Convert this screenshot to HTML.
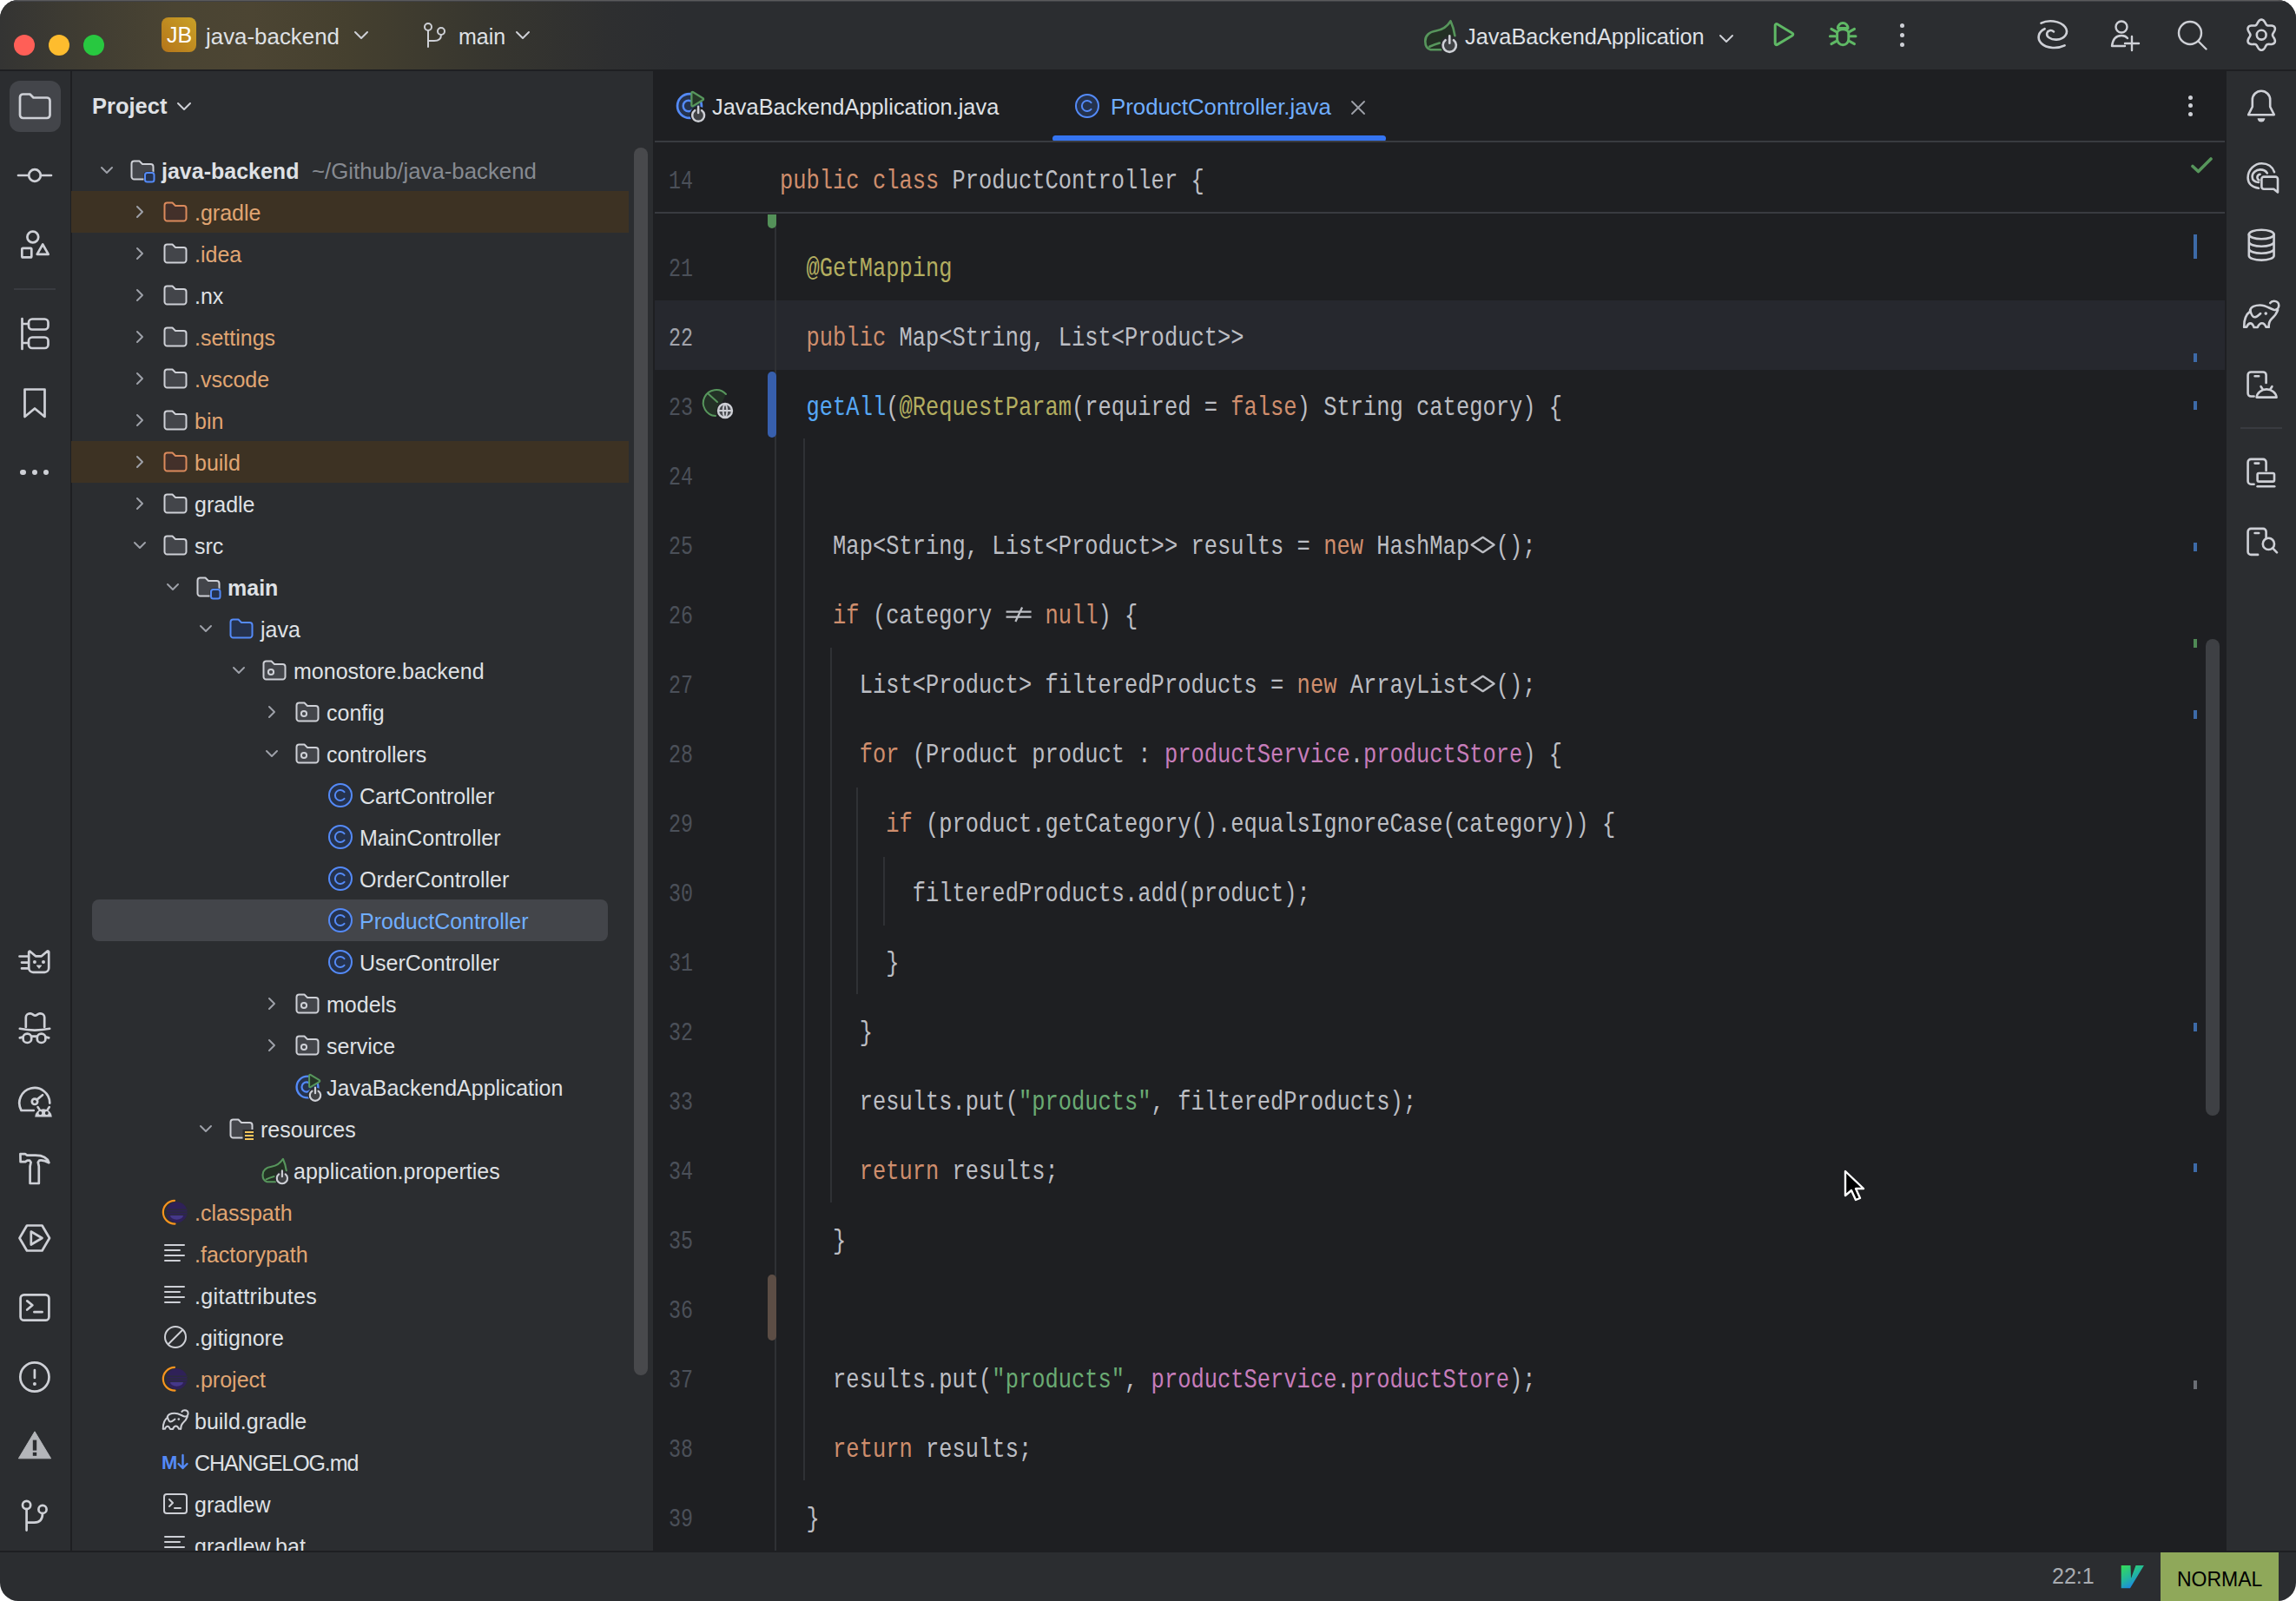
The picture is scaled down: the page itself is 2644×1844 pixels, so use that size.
<!DOCTYPE html><html><head><meta charset="utf-8"><style>html,body{margin:0;padding:0;background:#fff;width:2644px;height:1844px;overflow:hidden}#win{position:absolute;left:0;top:0;width:2644px;height:1844px;border-radius:21px;overflow:hidden;background:#2b2d30}.code{position:absolute;font-family:"Liberation Mono",monospace;font-size:32px;line-height:80px;color:#bcbec4;white-space:pre;transform-origin:0 0;transform:scaleX(0.7953)}.k{color:#cf8e6d}.an{color:#b3ae60}.fn{color:#56a8f5}.fd{color:#c77dbb}.st{color:#6aab73}.lig{display:inline-block;width:2ch;text-align:center;position:relative}</style></head><body><div id="win"><div style="position:absolute;left:0;top:0;width:2644px;height:80px;background:linear-gradient(90deg, #343433 0px, #3f3c32 90px, #4a4433 200px, #4c4533 290px, #45402f 400px, #37362f 560px, #2e2f30 700px, #2b2d30 780px)"></div><div style="position:absolute;left:0px;top:0px;width:2644px;height:1px;background:#5a5a5c;"></div><div style="position:absolute;left:0px;top:1px;width:2644px;height:1px;background:#404145;"></div><div style="position:absolute;left:0px;top:80px;width:2644px;height:2px;background:#1e1f22;"></div><div style="position:absolute;left:16px;top:40px;width:24px;height:24px;border-radius:50%;background:#ff5f57"></div><div style="position:absolute;left:56px;top:40px;width:24px;height:24px;border-radius:50%;background:#febc2e"></div><div style="position:absolute;left:96px;top:40px;width:24px;height:24px;border-radius:50%;background:#28c840"></div><div style="position:absolute;left:186px;top:20px;width:40px;height:40px;border-radius:8px;background:linear-gradient(45deg,#b5751a,#c9a127)"></div><div style="position:absolute;left:192px;top:27px;font-family:'Liberation Sans', sans-serif;font-size:25px;line-height:26px;color:#fff;font-weight:400;white-space:pre;">JB</div><div style="position:absolute;left:237px;top:28.5px;font-family:'Liberation Sans', sans-serif;font-size:25.9px;line-height:26px;color:#dfe1e5;font-weight:400;white-space:pre;">java-backend</div><svg style="position:absolute;left:404px;top:28px;overflow:visible" width="24" height="24" viewBox="0 0 24 24" fill="none" stroke-linecap="round" stroke-linejoin="round"><path d="M5 9l7 7 7-7" stroke="#ced0d6" stroke-width="2"/></svg><svg style="position:absolute;left:484px;top:24px;overflow:visible" width="32" height="32" viewBox="0 0 32 32" fill="none" stroke-linecap="round" stroke-linejoin="round"><circle cx="9" cy="7" r="4" stroke="#ced0d6" stroke-width="2"/><circle cx="24" cy="12" r="4" stroke="#ced0d6" stroke-width="2"/><path d="M9 11v19M24 16c0 5-3 7-8 7h-7" stroke="#ced0d6" stroke-width="2"/></svg><div style="position:absolute;left:528px;top:28.5px;font-family:'Liberation Sans', sans-serif;font-size:25px;line-height:26px;color:#dfe1e5;font-weight:400;white-space:pre;">main</div><svg style="position:absolute;left:590px;top:28px;overflow:visible" width="24" height="24" viewBox="0 0 24 24" fill="none" stroke-linecap="round" stroke-linejoin="round"><path d="M5 9l7 7 7-7" stroke="#ced0d6" stroke-width="2"/></svg><svg style="position:absolute;left:1640px;top:23px;overflow:visible" width="40" height="40" viewBox="0 0 32 32" fill="none" stroke-linecap="round" stroke-linejoin="round"><g><path d="M24.4 1C21 6.5 17 9 11 10 5 11 1 14 1 19.5c0 4 2 7 5 7.9h9.5L28.3 14.5C27.6 10 26.2 5 24.4 1z" fill="#233024"/><path d="M15.5 27.4H6c-3-.9-5-3.9-5-7.9C1 14 5 11 11 10c6-1 10-3.5 13.4-9 1.8 4 3.2 9 3.9 13.5" stroke="#57965c" stroke-width="2.1"/><path d="M5 24.6c3-1.5 6-2.5 9.2-3.4" stroke="#57965c" stroke-width="2.1"/><circle cx="23.4" cy="23" r="8.4" fill="#2b2d30"/><circle cx="23.4" cy="23" r="6" fill="#404245"/><path d="M19.6 18.6a6.1 6.1 0 1 0 7.6 0M23.4 14.6v6.8" stroke="#ced0d6" stroke-width="2.1"/></g></svg><div style="position:absolute;left:1687px;top:28.5px;font-family:'Liberation Sans', sans-serif;font-size:25.3px;line-height:26px;color:#dfe1e5;font-weight:400;white-space:pre;">JavaBackendApplication</div><svg style="position:absolute;left:1976px;top:32px;overflow:visible" width="24" height="24" viewBox="0 0 24 24" fill="none" stroke-linecap="round" stroke-linejoin="round"><path d="M5 9l7 7 7-7" stroke="#ced0d6" stroke-width="2"/></svg><svg style="position:absolute;left:0;top:0" width="2644" height="80"><g stroke="#5fb865" stroke-width="3" fill="none" stroke-linecap="round" stroke-linejoin="round"><path d="M2044.2 29.2a1.6 1.6 0 0 1 2.4-1.4l17.4 10.4a1.6 1.6 0 0 1 0 2.8L2046.6 51.4a1.6 1.6 0 0 1-2.4-1.4z"/><path d="M2116.4 32.4a5.8 5.8 0 0 1 11.6 0z"/><path d="M2115.6 38a6.6 4.2 0 0 1 13.2 0v7a6.6 6.8 0 0 1-13.2 0z"/><path d="M2108.9 33.4l5.4 3M2107.4 41.8h6M2108.9 50.6l5.4-3M2135.5 33.4l-5.4 3M2137 41.8h-6M2135.5 50.6l-5.4-3"/></g></svg><div style="position:absolute;left:2187.5px;top:26.9px;width:5.2px;height:5.2px;border-radius:50%;background:#ced0d6"></div><div style="position:absolute;left:2187.5px;top:37.9px;width:5.2px;height:5.2px;border-radius:50%;background:#ced0d6"></div><div style="position:absolute;left:2187.5px;top:48.9px;width:5.2px;height:5.2px;border-radius:50%;background:#ced0d6"></div><svg style="position:absolute;left:2428px;top:22px;overflow:visible" width="38" height="38" viewBox="0 0 38 38" fill="none" stroke-linecap="round" stroke-linejoin="round"><circle cx="15" cy="9" r="6.5" stroke="#ced0d6" stroke-width="2.4"/><path d="M22 22c-1.5-2-4-3-7-3-6 0-10 4-11 12h15M27 20v16M19 28h16" stroke="#ced0d6" stroke-width="2.4"/></svg><svg style="position:absolute;left:2506px;top:22px;overflow:visible" width="38" height="38" viewBox="0 0 38 38" fill="none" stroke-linecap="round" stroke-linejoin="round"><circle cx="16" cy="16" r="13" stroke="#ced0d6" stroke-width="2.4"/><path d="M25.5 25.5l9 9" stroke="#ced0d6" stroke-width="2.4"/></svg><svg style="position:absolute;left:0;top:0" width="2644" height="80"><g stroke="#ced0d6" stroke-width="2.6" fill="none" stroke-linecap="round" stroke-linejoin="round"><path d="M2604.20 22.60 L2604.81 22.66 L2605.41 22.85 L2605.99 23.15 L2606.54 23.56 L2607.05 24.05 L2607.51 24.61 L2607.94 25.21 L2608.32 25.83 L2608.67 26.45 L2608.99 27.04 L2609.29 27.60 L2609.59 28.09 L2609.90 28.51 L2610.23 28.85 L2610.60 29.11 L2611.01 29.30 L2611.47 29.42 L2611.99 29.47 L2612.57 29.49 L2613.20 29.48 L2613.87 29.46 L2614.58 29.45 L2615.31 29.47 L2616.05 29.53 L2616.76 29.66 L2617.44 29.85 L2618.07 30.12 L2618.62 30.47 L2619.08 30.90 L2619.44 31.40 L2619.69 31.96 L2619.83 32.58 L2619.86 33.23 L2619.78 33.90 L2619.61 34.59 L2619.36 35.27 L2619.05 35.94 L2618.71 36.58 L2618.34 37.19 L2617.99 37.77 L2617.66 38.31 L2617.39 38.81 L2617.18 39.29 L2617.04 39.75 L2617.00 40.20 L2617.04 40.65 L2617.18 41.11 L2617.39 41.59 L2617.66 42.09 L2617.99 42.63 L2618.34 43.21 L2618.71 43.82 L2619.05 44.46 L2619.36 45.13 L2619.61 45.81 L2619.78 46.50 L2619.86 47.17 L2619.83 47.82 L2619.69 48.44 L2619.44 49.00 L2619.08 49.50 L2618.62 49.93 L2618.07 50.28 L2617.44 50.55 L2616.76 50.74 L2616.05 50.87 L2615.31 50.93 L2614.58 50.95 L2613.87 50.94 L2613.20 50.92 L2612.57 50.91 L2611.99 50.93 L2611.47 50.98 L2611.01 51.10 L2610.60 51.29 L2610.23 51.55 L2609.90 51.89 L2609.59 52.31 L2609.29 52.80 L2608.99 53.36 L2608.67 53.95 L2608.32 54.57 L2607.94 55.19 L2607.51 55.79 L2607.05 56.35 L2606.54 56.84 L2605.99 57.25 L2605.41 57.55 L2604.81 57.74 L2604.20 57.80 L2603.59 57.74 L2602.99 57.55 L2602.41 57.25 L2601.86 56.84 L2601.35 56.35 L2600.89 55.79 L2600.46 55.19 L2600.08 54.57 L2599.73 53.95 L2599.41 53.36 L2599.11 52.80 L2598.81 52.31 L2598.50 51.89 L2598.17 51.55 L2597.80 51.29 L2597.39 51.10 L2596.93 50.98 L2596.41 50.93 L2595.83 50.91 L2595.20 50.92 L2594.53 50.94 L2593.82 50.95 L2593.09 50.93 L2592.35 50.87 L2591.64 50.74 L2590.96 50.55 L2590.33 50.28 L2589.78 49.93 L2589.32 49.50 L2588.96 49.00 L2588.71 48.44 L2588.57 47.82 L2588.54 47.17 L2588.62 46.50 L2588.79 45.81 L2589.04 45.13 L2589.35 44.46 L2589.69 43.82 L2590.06 43.21 L2590.41 42.63 L2590.74 42.09 L2591.01 41.59 L2591.22 41.11 L2591.36 40.65 L2591.40 40.20 L2591.36 39.75 L2591.22 39.29 L2591.01 38.81 L2590.74 38.31 L2590.41 37.77 L2590.06 37.19 L2589.69 36.58 L2589.35 35.94 L2589.04 35.27 L2588.79 34.59 L2588.62 33.90 L2588.54 33.23 L2588.57 32.58 L2588.71 31.96 L2588.96 31.40 L2589.32 30.90 L2589.78 30.47 L2590.33 30.12 L2590.96 29.85 L2591.64 29.66 L2592.35 29.53 L2593.09 29.47 L2593.82 29.45 L2594.53 29.46 L2595.20 29.48 L2595.83 29.49 L2596.41 29.47 L2596.93 29.42 L2597.39 29.30 L2597.80 29.11 L2598.17 28.85 L2598.50 28.51 L2598.81 28.09 L2599.11 27.60 L2599.41 27.04 L2599.73 26.45 L2600.08 25.83 L2600.46 25.21 L2600.89 24.61 L2601.35 24.05 L2601.86 23.56 L2602.41 23.15 L2602.99 22.85 L2603.59 22.66 L2604.20 22.60Z"/><circle cx="2604.2" cy="40.2" r="5.4"/><path d="M2350.5 26.6C2358 22.8 2372 23.2 2378.2 31.2 2383 37.8 2377.4 45 2368.4 45.6 2361.4 46 2356.4 42.2 2357.2 38.2 2358 35 2362.2 34 2365 36.4"/><path d="M2377.6 52.4C2370 56.2 2357 56.2 2350.8 50 2345 44 2347.6 36.4 2354.6 33.2"/></g></svg><div style="position:absolute;left:81px;top:82px;width:2px;height:1704px;background:#1e1f22;"></div><div style="position:absolute;left:10.5px;top:92.5px;width:59.5px;height:59px;border-radius:12px;background:#43454a"></div><svg style="position:absolute;left:0;top:0" width="81" height="1844" viewBox="0 0 81 1844"><g stroke="#ced0d6" stroke-width="2.7" fill="none" stroke-linecap="round" stroke-linejoin="round"><path d="M23 112a3.5 3.5 0 0 1 3.5-3.5h8l4 4h15.5a3.5 3.5 0 0 1 3.5 3.5v16.5a3.5 3.5 0 0 1-3.5 3.5h-27.5a3.5 3.5 0 0 1-3.5-3.5z"/><circle cx="40" cy="202" r="6.8"/><path d="M21 202h12M47 202h12"/><circle cx="37.8" cy="273" r="6.4"/><rect x="25.3" y="285.8" width="11" height="10.6" rx="1.2"/><path d="M49.2 281.5l6.5 11.3h-13z"/><path d="M25.5 367v35M25.5 373h6M25.5 395h6"/><rect x="33" y="367.5" width="22.5" height="12" rx="4"/><rect x="33" y="388.5" width="22.5" height="12.5" rx="4"/><path d="M28.5 448.5h23v31.5l-11.5-9.5-11.5 9.5z"/><path d="M22.5 1101.5h10M25 1108.6h7.6M25 1115.4h7.6"/><path d="M34.2 1095.5l6.8 5.8h6.8l6.8-5.8a1.2 1.2 0 0 1 1.6 1v18.5a4.8 4.8 0 0 1-4.8 4.8h-13.4a4.8 4.8 0 0 1-4.8-4.8v-18.5a1.2 1.2 0 0 1 1-1z"/><path d="M29.8 1183v-11.2a4.5 4.5 0 0 1 4.5-4.5h1c2.2 0 3.3 2.4 5.2 2.4s3-2.4 5.2-2.4h1a4.5 4.5 0 0 1 4.5 4.5v11.2"/><path d="M22.8 1184.8q17.2 3.6 34.4 0"/><rect x="26.6" y="1190.6" width="9.6" height="10.4" rx="4.6"/><rect x="42.8" y="1190.6" width="9.6" height="10.4" rx="4.6"/><path d="M36.2 1193.6h6.6M22.8 1195.4l3.8-1M52.4 1194.4l3.8 1"/><path d="M38.8 1279H24.5A17.5 17.5 0 1 1 57.3 1270.6"/><circle cx="40" cy="1268.8" r="3.2"/><path d="M42.4 1266.6l6.6-5.4"/></g><circle cx="39.9" cy="1108" r="2" fill="#ced0d6"/><circle cx="50" cy="1108" r="2" fill="#ced0d6"/><path d="M42.2 1112h5.6l-2.8 3.4z" fill="#ced0d6" stroke="#ced0d6" stroke-width="0.8" stroke-linejoin="round"/><path d="M40.2 1286.5a9.8 9.3 0 0 1 19.6 0z" fill="#ced0d6"/><path d="M43.5 1275l2.4 3.6M56.8 1275l-2.4 3.6" stroke="#ced0d6" stroke-width="2.6" stroke-linecap="round"/><circle cx="46.4" cy="1282" r="1.9" fill="#2b2d30"/><circle cx="53.8" cy="1282" r="1.9" fill="#2b2d30"/><g stroke="#ced0d6" stroke-width="2.7" fill="none" stroke-linecap="round" stroke-linejoin="round"><path d="M23.4 1329.2h5.6l2.2 1.4h9.6c8 0 13.8 2.8 15.6 8.6-3.6-2-8-3.2-11.2-2.6l-1.4 2.2 1 4.6v19.6h-10.2v-19.6l1-4.6-1.4-2.2h-2.8l-2.2 1.6h-5.6z"/><path d="M22.5 1426l8.5-14.5h17.5l8.5 14.5-8.5 14.5h-17.5z"/><path d="M35.8 1418.5l12.7 7.5-12.7 7.5z"/><rect x="23.6" y="1491.3" width="32.8" height="29.4" rx="4"/><path d="M31.2 1498.4l6.2 4.8-6.2 5.4M39.4 1511.2h9.2"/><circle cx="39.9" cy="1586" r="16.6"/><path d="M39.9 1578v9"/></g><circle cx="39.9" cy="1594" r="2" fill="#ced0d6"/><path d="M40 1648.8L58.6 1679.8H21.4z" fill="#b4b6ba" stroke="#b4b6ba" stroke-width="1" stroke-linejoin="round"/><rect x="37.8" y="1658.6" width="4.4" height="12" fill="#2b2d30"/><rect x="37.8" y="1672.8" width="4.4" height="4" fill="#2b2d30"/><g stroke="#ced0d6" stroke-width="2.7" fill="none" stroke-linecap="round" stroke-linejoin="round"><circle cx="30.6" cy="1733.5" r="4.6"/><circle cx="49" cy="1738.4" r="4.6"/><path d="M30.6 1738.2v24.4M49 1743c0 6.5-3 10.6-9.5 10.6h-8.9"/></g></svg><div style="position:absolute;left:23.3px;top:540.8px;width:6.4px;height:6.4px;border-radius:50%;background:#ced0d6"></div><div style="position:absolute;left:36.5px;top:540.8px;width:6.4px;height:6.4px;border-radius:50%;background:#ced0d6"></div><div style="position:absolute;left:49.599999999999994px;top:540.8px;width:6.4px;height:6.4px;border-radius:50%;background:#ced0d6"></div><div style="position:absolute;left:16px;top:332px;width:48px;height:2px;background:#393b40;"></div><div style="position:absolute;left:106px;top:109px;font-family:'Liberation Sans', sans-serif;font-size:25.5px;line-height:26px;color:#dfe1e5;font-weight:700;white-space:pre;">Project</div><svg style="position:absolute;left:200px;top:110px;overflow:visible" width="24" height="24" viewBox="0 0 24 24" fill="none" stroke-linecap="round" stroke-linejoin="round"><path d="M5 9l7 7 7-7" stroke="#ced0d6" stroke-width="2"/></svg><div style="position:absolute;left:0;top:0;width:752px;height:1786px;overflow:hidden"><div style="position:absolute;left:0;top:172px;width:752px;height:1614px;overflow:hidden"><div style="position:absolute;left:0;top:-172px"><svg style="position:absolute;left:107px;top:180px;overflow:visible" width="32" height="32" viewBox="0 0 32 32" fill="none" stroke-linecap="round" stroke-linejoin="round"><path d="M10 13l6 6 6-6" stroke="#9da0a8" stroke-width="2"/></svg><svg style="position:absolute;left:148px;top:180px;overflow:visible" width="32" height="32" viewBox="0 0 32 32" fill="none" stroke-linecap="round" stroke-linejoin="round"><path d="M3.5 8.5a3 3 0 0 1 3-3h6l3.5 3.5h9.5a3 3 0 0 1 3 3v11.5a3 3 0 0 1-3 3h-19a3 3 0 0 1-3-3z" stroke="#ced0d6" stroke-width="2" fill="#43454a"/><rect x="17.5" y="17.5" width="13" height="13" rx="3.5" fill="#2b2d30"/><rect x="19" y="19" width="10.5" height="10.5" rx="2.5" stroke="#548af7" stroke-width="2" fill="#25324d"/></svg><div style="position:absolute;left:186px;top:183.5px;font-family:'Liberation Sans', sans-serif;font-size:25px;line-height:26px;color:#dfe1e5;font-weight:700;white-space:pre;">java-backend</div><div style="position:absolute;left:359px;top:183.5px;font-family:'Liberation Sans', sans-serif;font-size:25.8px;line-height:26px;color:#868a91;font-weight:400;white-space:pre;">~/Github/java-backend</div><div style="position:absolute;left:82px;top:220px;width:642px;height:48px;background:#3d3223;"></div><svg style="position:absolute;left:145px;top:228px;overflow:visible" width="32" height="32" viewBox="0 0 32 32" fill="none" stroke-linecap="round" stroke-linejoin="round"><path d="M13 10l6 6-6 6" stroke="#9da0a8" stroke-width="2"/></svg><svg style="position:absolute;left:186px;top:228px;overflow:visible" width="32" height="32" viewBox="0 0 32 32" fill="none" stroke-linecap="round" stroke-linejoin="round"><path d="M3.5 8.5a3 3 0 0 1 3-3h6l3.5 3.5h9.5a3 3 0 0 1 3 3v11.5a3 3 0 0 1-3 3h-19a3 3 0 0 1-3-3z" stroke="#db8a5c" stroke-width="2" fill="#43302a"/></svg><div style="position:absolute;left:224px;top:231.5px;font-family:'Liberation Sans', sans-serif;font-size:25px;line-height:26px;color:#e0a572;font-weight:400;white-space:pre;">.gradle</div><svg style="position:absolute;left:145px;top:276px;overflow:visible" width="32" height="32" viewBox="0 0 32 32" fill="none" stroke-linecap="round" stroke-linejoin="round"><path d="M13 10l6 6-6 6" stroke="#9da0a8" stroke-width="2"/></svg><svg style="position:absolute;left:186px;top:276px;overflow:visible" width="32" height="32" viewBox="0 0 32 32" fill="none" stroke-linecap="round" stroke-linejoin="round"><path d="M3.5 8.5a3 3 0 0 1 3-3h6l3.5 3.5h9.5a3 3 0 0 1 3 3v11.5a3 3 0 0 1-3 3h-19a3 3 0 0 1-3-3z" stroke="#ced0d6" stroke-width="2" fill="#43454a"/></svg><div style="position:absolute;left:224px;top:279.5px;font-family:'Liberation Sans', sans-serif;font-size:25px;line-height:26px;color:#e0a572;font-weight:400;white-space:pre;">.idea</div><svg style="position:absolute;left:145px;top:324px;overflow:visible" width="32" height="32" viewBox="0 0 32 32" fill="none" stroke-linecap="round" stroke-linejoin="round"><path d="M13 10l6 6-6 6" stroke="#9da0a8" stroke-width="2"/></svg><svg style="position:absolute;left:186px;top:324px;overflow:visible" width="32" height="32" viewBox="0 0 32 32" fill="none" stroke-linecap="round" stroke-linejoin="round"><path d="M3.5 8.5a3 3 0 0 1 3-3h6l3.5 3.5h9.5a3 3 0 0 1 3 3v11.5a3 3 0 0 1-3 3h-19a3 3 0 0 1-3-3z" stroke="#ced0d6" stroke-width="2" fill="#43454a"/></svg><div style="position:absolute;left:224px;top:327.5px;font-family:'Liberation Sans', sans-serif;font-size:25px;line-height:26px;color:#dfe1e5;font-weight:400;white-space:pre;">.nx</div><svg style="position:absolute;left:145px;top:372px;overflow:visible" width="32" height="32" viewBox="0 0 32 32" fill="none" stroke-linecap="round" stroke-linejoin="round"><path d="M13 10l6 6-6 6" stroke="#9da0a8" stroke-width="2"/></svg><svg style="position:absolute;left:186px;top:372px;overflow:visible" width="32" height="32" viewBox="0 0 32 32" fill="none" stroke-linecap="round" stroke-linejoin="round"><path d="M3.5 8.5a3 3 0 0 1 3-3h6l3.5 3.5h9.5a3 3 0 0 1 3 3v11.5a3 3 0 0 1-3 3h-19a3 3 0 0 1-3-3z" stroke="#ced0d6" stroke-width="2" fill="#43454a"/></svg><div style="position:absolute;left:224px;top:375.5px;font-family:'Liberation Sans', sans-serif;font-size:25px;line-height:26px;color:#e0a572;font-weight:400;white-space:pre;">.settings</div><svg style="position:absolute;left:145px;top:420px;overflow:visible" width="32" height="32" viewBox="0 0 32 32" fill="none" stroke-linecap="round" stroke-linejoin="round"><path d="M13 10l6 6-6 6" stroke="#9da0a8" stroke-width="2"/></svg><svg style="position:absolute;left:186px;top:420px;overflow:visible" width="32" height="32" viewBox="0 0 32 32" fill="none" stroke-linecap="round" stroke-linejoin="round"><path d="M3.5 8.5a3 3 0 0 1 3-3h6l3.5 3.5h9.5a3 3 0 0 1 3 3v11.5a3 3 0 0 1-3 3h-19a3 3 0 0 1-3-3z" stroke="#ced0d6" stroke-width="2" fill="#43454a"/></svg><div style="position:absolute;left:224px;top:423.5px;font-family:'Liberation Sans', sans-serif;font-size:25px;line-height:26px;color:#e0a572;font-weight:400;white-space:pre;">.vscode</div><svg style="position:absolute;left:145px;top:468px;overflow:visible" width="32" height="32" viewBox="0 0 32 32" fill="none" stroke-linecap="round" stroke-linejoin="round"><path d="M13 10l6 6-6 6" stroke="#9da0a8" stroke-width="2"/></svg><svg style="position:absolute;left:186px;top:468px;overflow:visible" width="32" height="32" viewBox="0 0 32 32" fill="none" stroke-linecap="round" stroke-linejoin="round"><path d="M3.5 8.5a3 3 0 0 1 3-3h6l3.5 3.5h9.5a3 3 0 0 1 3 3v11.5a3 3 0 0 1-3 3h-19a3 3 0 0 1-3-3z" stroke="#ced0d6" stroke-width="2" fill="#43454a"/></svg><div style="position:absolute;left:224px;top:471.5px;font-family:'Liberation Sans', sans-serif;font-size:25px;line-height:26px;color:#e0a572;font-weight:400;white-space:pre;">bin</div><div style="position:absolute;left:82px;top:508px;width:642px;height:48px;background:#3d3223;"></div><svg style="position:absolute;left:145px;top:516px;overflow:visible" width="32" height="32" viewBox="0 0 32 32" fill="none" stroke-linecap="round" stroke-linejoin="round"><path d="M13 10l6 6-6 6" stroke="#9da0a8" stroke-width="2"/></svg><svg style="position:absolute;left:186px;top:516px;overflow:visible" width="32" height="32" viewBox="0 0 32 32" fill="none" stroke-linecap="round" stroke-linejoin="round"><path d="M3.5 8.5a3 3 0 0 1 3-3h6l3.5 3.5h9.5a3 3 0 0 1 3 3v11.5a3 3 0 0 1-3 3h-19a3 3 0 0 1-3-3z" stroke="#db8a5c" stroke-width="2" fill="#43302a"/></svg><div style="position:absolute;left:224px;top:519.5px;font-family:'Liberation Sans', sans-serif;font-size:25px;line-height:26px;color:#e0a572;font-weight:400;white-space:pre;">build</div><svg style="position:absolute;left:145px;top:564px;overflow:visible" width="32" height="32" viewBox="0 0 32 32" fill="none" stroke-linecap="round" stroke-linejoin="round"><path d="M13 10l6 6-6 6" stroke="#9da0a8" stroke-width="2"/></svg><svg style="position:absolute;left:186px;top:564px;overflow:visible" width="32" height="32" viewBox="0 0 32 32" fill="none" stroke-linecap="round" stroke-linejoin="round"><path d="M3.5 8.5a3 3 0 0 1 3-3h6l3.5 3.5h9.5a3 3 0 0 1 3 3v11.5a3 3 0 0 1-3 3h-19a3 3 0 0 1-3-3z" stroke="#ced0d6" stroke-width="2" fill="#43454a"/></svg><div style="position:absolute;left:224px;top:567.5px;font-family:'Liberation Sans', sans-serif;font-size:25px;line-height:26px;color:#dfe1e5;font-weight:400;white-space:pre;">gradle</div><svg style="position:absolute;left:145px;top:612px;overflow:visible" width="32" height="32" viewBox="0 0 32 32" fill="none" stroke-linecap="round" stroke-linejoin="round"><path d="M10 13l6 6 6-6" stroke="#9da0a8" stroke-width="2"/></svg><svg style="position:absolute;left:186px;top:612px;overflow:visible" width="32" height="32" viewBox="0 0 32 32" fill="none" stroke-linecap="round" stroke-linejoin="round"><path d="M3.5 8.5a3 3 0 0 1 3-3h6l3.5 3.5h9.5a3 3 0 0 1 3 3v11.5a3 3 0 0 1-3 3h-19a3 3 0 0 1-3-3z" stroke="#ced0d6" stroke-width="2" fill="#43454a"/></svg><div style="position:absolute;left:224px;top:615.5px;font-family:'Liberation Sans', sans-serif;font-size:25px;line-height:26px;color:#dfe1e5;font-weight:400;white-space:pre;">src</div><svg style="position:absolute;left:183px;top:660px;overflow:visible" width="32" height="32" viewBox="0 0 32 32" fill="none" stroke-linecap="round" stroke-linejoin="round"><path d="M10 13l6 6 6-6" stroke="#9da0a8" stroke-width="2"/></svg><svg style="position:absolute;left:224px;top:660px;overflow:visible" width="32" height="32" viewBox="0 0 32 32" fill="none" stroke-linecap="round" stroke-linejoin="round"><path d="M3.5 8.5a3 3 0 0 1 3-3h6l3.5 3.5h9.5a3 3 0 0 1 3 3v11.5a3 3 0 0 1-3 3h-19a3 3 0 0 1-3-3z" stroke="#ced0d6" stroke-width="2" fill="#43454a"/><rect x="17.5" y="17.5" width="13" height="13" rx="3.5" fill="#2b2d30"/><rect x="19" y="19" width="10.5" height="10.5" rx="2.5" stroke="#548af7" stroke-width="2" fill="#25324d"/></svg><div style="position:absolute;left:262px;top:663.5px;font-family:'Liberation Sans', sans-serif;font-size:25px;line-height:26px;color:#dfe1e5;font-weight:700;white-space:pre;">main</div><svg style="position:absolute;left:221px;top:708px;overflow:visible" width="32" height="32" viewBox="0 0 32 32" fill="none" stroke-linecap="round" stroke-linejoin="round"><path d="M10 13l6 6 6-6" stroke="#9da0a8" stroke-width="2"/></svg><svg style="position:absolute;left:262px;top:708px;overflow:visible" width="32" height="32" viewBox="0 0 32 32" fill="none" stroke-linecap="round" stroke-linejoin="round"><path d="M3.5 8.5a3 3 0 0 1 3-3h6l3.5 3.5h9.5a3 3 0 0 1 3 3v11.5a3 3 0 0 1-3 3h-19a3 3 0 0 1-3-3z" stroke="#548af7" stroke-width="2" fill="#25324d"/></svg><div style="position:absolute;left:300px;top:711.5px;font-family:'Liberation Sans', sans-serif;font-size:25px;line-height:26px;color:#dfe1e5;font-weight:400;white-space:pre;">java</div><svg style="position:absolute;left:259px;top:756px;overflow:visible" width="32" height="32" viewBox="0 0 32 32" fill="none" stroke-linecap="round" stroke-linejoin="round"><path d="M10 13l6 6 6-6" stroke="#9da0a8" stroke-width="2"/></svg><svg style="position:absolute;left:300px;top:756px;overflow:visible" width="32" height="32" viewBox="0 0 32 32" fill="none" stroke-linecap="round" stroke-linejoin="round"><path d="M3.5 8.5a3 3 0 0 1 3-3h6l3.5 3.5h9.5a3 3 0 0 1 3 3v11.5a3 3 0 0 1-3 3h-19a3 3 0 0 1-3-3z" stroke="#ced0d6" stroke-width="2" fill="#43454a"/><circle cx="12" cy="18" r="3.1" stroke="#ced0d6" stroke-width="2"/></svg><div style="position:absolute;left:338px;top:759.5px;font-family:'Liberation Sans', sans-serif;font-size:25px;line-height:26px;color:#dfe1e5;font-weight:400;white-space:pre;">monostore.backend</div><svg style="position:absolute;left:297px;top:804px;overflow:visible" width="32" height="32" viewBox="0 0 32 32" fill="none" stroke-linecap="round" stroke-linejoin="round"><path d="M13 10l6 6-6 6" stroke="#9da0a8" stroke-width="2"/></svg><svg style="position:absolute;left:338px;top:804px;overflow:visible" width="32" height="32" viewBox="0 0 32 32" fill="none" stroke-linecap="round" stroke-linejoin="round"><path d="M3.5 8.5a3 3 0 0 1 3-3h6l3.5 3.5h9.5a3 3 0 0 1 3 3v11.5a3 3 0 0 1-3 3h-19a3 3 0 0 1-3-3z" stroke="#ced0d6" stroke-width="2" fill="#43454a"/><circle cx="12" cy="18" r="3.1" stroke="#ced0d6" stroke-width="2"/></svg><div style="position:absolute;left:376px;top:807.5px;font-family:'Liberation Sans', sans-serif;font-size:25px;line-height:26px;color:#dfe1e5;font-weight:400;white-space:pre;">config</div><svg style="position:absolute;left:297px;top:852px;overflow:visible" width="32" height="32" viewBox="0 0 32 32" fill="none" stroke-linecap="round" stroke-linejoin="round"><path d="M10 13l6 6 6-6" stroke="#9da0a8" stroke-width="2"/></svg><svg style="position:absolute;left:338px;top:852px;overflow:visible" width="32" height="32" viewBox="0 0 32 32" fill="none" stroke-linecap="round" stroke-linejoin="round"><path d="M3.5 8.5a3 3 0 0 1 3-3h6l3.5 3.5h9.5a3 3 0 0 1 3 3v11.5a3 3 0 0 1-3 3h-19a3 3 0 0 1-3-3z" stroke="#ced0d6" stroke-width="2" fill="#43454a"/><circle cx="12" cy="18" r="3.1" stroke="#ced0d6" stroke-width="2"/></svg><div style="position:absolute;left:376px;top:855.5px;font-family:'Liberation Sans', sans-serif;font-size:25px;line-height:26px;color:#dfe1e5;font-weight:400;white-space:pre;">controllers</div><svg style="position:absolute;left:376px;top:900px;overflow:visible" width="32" height="32" viewBox="0 0 32 32" fill="none" stroke-linecap="round" stroke-linejoin="round"><circle cx="16" cy="16" r="13" stroke="#548af7" stroke-width="2" fill="#25324d"/><path d="M20.5 12.2a6 6 0 1 0 0 7.6" stroke="#548af7" stroke-width="2"/></svg><div style="position:absolute;left:414px;top:903.5px;font-family:'Liberation Sans', sans-serif;font-size:25px;line-height:26px;color:#dfe1e5;font-weight:400;white-space:pre;">CartController</div><svg style="position:absolute;left:376px;top:948px;overflow:visible" width="32" height="32" viewBox="0 0 32 32" fill="none" stroke-linecap="round" stroke-linejoin="round"><circle cx="16" cy="16" r="13" stroke="#548af7" stroke-width="2" fill="#25324d"/><path d="M20.5 12.2a6 6 0 1 0 0 7.6" stroke="#548af7" stroke-width="2"/></svg><div style="position:absolute;left:414px;top:951.5px;font-family:'Liberation Sans', sans-serif;font-size:25px;line-height:26px;color:#dfe1e5;font-weight:400;white-space:pre;">MainController</div><svg style="position:absolute;left:376px;top:996px;overflow:visible" width="32" height="32" viewBox="0 0 32 32" fill="none" stroke-linecap="round" stroke-linejoin="round"><circle cx="16" cy="16" r="13" stroke="#548af7" stroke-width="2" fill="#25324d"/><path d="M20.5 12.2a6 6 0 1 0 0 7.6" stroke="#548af7" stroke-width="2"/></svg><div style="position:absolute;left:414px;top:999.5px;font-family:'Liberation Sans', sans-serif;font-size:25px;line-height:26px;color:#dfe1e5;font-weight:400;white-space:pre;">OrderController</div><div style="position:absolute;left:106px;top:1036px;width:594px;height:48px;background:#43454a;border-radius:8px"></div><svg style="position:absolute;left:376px;top:1044px;overflow:visible" width="32" height="32" viewBox="0 0 32 32" fill="none" stroke-linecap="round" stroke-linejoin="round"><circle cx="16" cy="16" r="13" stroke="#548af7" stroke-width="2" fill="#25324d"/><path d="M20.5 12.2a6 6 0 1 0 0 7.6" stroke="#548af7" stroke-width="2"/></svg><div style="position:absolute;left:414px;top:1047.5px;font-family:'Liberation Sans', sans-serif;font-size:25px;line-height:26px;color:#70aeff;font-weight:400;white-space:pre;">ProductController</div><svg style="position:absolute;left:376px;top:1092px;overflow:visible" width="32" height="32" viewBox="0 0 32 32" fill="none" stroke-linecap="round" stroke-linejoin="round"><circle cx="16" cy="16" r="13" stroke="#548af7" stroke-width="2" fill="#25324d"/><path d="M20.5 12.2a6 6 0 1 0 0 7.6" stroke="#548af7" stroke-width="2"/></svg><div style="position:absolute;left:414px;top:1095.5px;font-family:'Liberation Sans', sans-serif;font-size:25px;line-height:26px;color:#dfe1e5;font-weight:400;white-space:pre;">UserController</div><svg style="position:absolute;left:297px;top:1140px;overflow:visible" width="32" height="32" viewBox="0 0 32 32" fill="none" stroke-linecap="round" stroke-linejoin="round"><path d="M13 10l6 6-6 6" stroke="#9da0a8" stroke-width="2"/></svg><svg style="position:absolute;left:338px;top:1140px;overflow:visible" width="32" height="32" viewBox="0 0 32 32" fill="none" stroke-linecap="round" stroke-linejoin="round"><path d="M3.5 8.5a3 3 0 0 1 3-3h6l3.5 3.5h9.5a3 3 0 0 1 3 3v11.5a3 3 0 0 1-3 3h-19a3 3 0 0 1-3-3z" stroke="#ced0d6" stroke-width="2" fill="#43454a"/><circle cx="12" cy="18" r="3.1" stroke="#ced0d6" stroke-width="2"/></svg><div style="position:absolute;left:376px;top:1143.5px;font-family:'Liberation Sans', sans-serif;font-size:25px;line-height:26px;color:#dfe1e5;font-weight:400;white-space:pre;">models</div><svg style="position:absolute;left:297px;top:1188px;overflow:visible" width="32" height="32" viewBox="0 0 32 32" fill="none" stroke-linecap="round" stroke-linejoin="round"><path d="M13 10l6 6-6 6" stroke="#9da0a8" stroke-width="2"/></svg><svg style="position:absolute;left:338px;top:1188px;overflow:visible" width="32" height="32" viewBox="0 0 32 32" fill="none" stroke-linecap="round" stroke-linejoin="round"><path d="M3.5 8.5a3 3 0 0 1 3-3h6l3.5 3.5h9.5a3 3 0 0 1 3 3v11.5a3 3 0 0 1-3 3h-19a3 3 0 0 1-3-3z" stroke="#ced0d6" stroke-width="2" fill="#43454a"/><circle cx="12" cy="18" r="3.1" stroke="#ced0d6" stroke-width="2"/></svg><div style="position:absolute;left:376px;top:1191.5px;font-family:'Liberation Sans', sans-serif;font-size:25px;line-height:26px;color:#dfe1e5;font-weight:400;white-space:pre;">service</div><svg style="position:absolute;left:338px;top:1236px;overflow:visible" width="32" height="32" viewBox="0 0 32 32" fill="none" stroke-linecap="round" stroke-linejoin="round"><circle cx="16" cy="16" r="12.4" stroke="#548af7" stroke-width="2.4" fill="#25324d"/><path d="M19.2 12.2a5.6 5.6 0 1 0 0 7.6" stroke="#548af7" stroke-width="2.2"/><path d="M19.5 1.8l10.4 6.4a1 1 0 0 1 0 1.6l-10.4 6.4a1 1 0 0 1-1.4-.8V2.6a1 1 0 0 1 1.4-.8z" stroke="#57965c" stroke-width="2" fill="#253627"/><circle cx="25" cy="25" r="8.6" fill="#2b2d30"/><circle cx="25" cy="25" r="6.4" fill="#404245"/><path d="M21.4 20.6a6.2 6.2 0 1 0 7.2 0M25 16.6v6.6" stroke="#ced0d6" stroke-width="2.2"/></svg><div style="position:absolute;left:376px;top:1239.5px;font-family:'Liberation Sans', sans-serif;font-size:25px;line-height:26px;color:#dfe1e5;font-weight:400;white-space:pre;">JavaBackendApplication</div><svg style="position:absolute;left:221px;top:1284px;overflow:visible" width="32" height="32" viewBox="0 0 32 32" fill="none" stroke-linecap="round" stroke-linejoin="round"><path d="M10 13l6 6 6-6" stroke="#9da0a8" stroke-width="2"/></svg><svg style="position:absolute;left:262px;top:1284px;overflow:visible" width="32" height="32" viewBox="0 0 32 32" fill="none" stroke-linecap="round" stroke-linejoin="round"><path d="M3.5 8.5a3 3 0 0 1 3-3h6l3.5 3.5h9.5a3 3 0 0 1 3 3v11.5a3 3 0 0 1-3 3h-19a3 3 0 0 1-3-3z" stroke="#ced0d6" stroke-width="2" fill="#43454a"/><rect x="17.5" y="17" width="14" height="14" fill="#2b2d30"/><path d="M20 20h10M20 24h10M20 28h10" stroke="#f2c55c" stroke-width="2" stroke-linecap="butt"/></svg><div style="position:absolute;left:300px;top:1287.5px;font-family:'Liberation Sans', sans-serif;font-size:25px;line-height:26px;color:#dfe1e5;font-weight:400;white-space:pre;">resources</div><svg style="position:absolute;left:300px;top:1332px;overflow:visible" width="32" height="32" viewBox="0 0 32 32" fill="none" stroke-linecap="round" stroke-linejoin="round"><g transform="translate(1.5 1.8)"><path d="M24.4 1C21 6.5 17 9 11 10 5 11 1 14 1 19.5c0 4 2 7 5 7.9h9.5L28.3 14.5C27.6 10 26.2 5 24.4 1z" fill="#233024"/><path d="M15.5 27.4H6c-3-.9-5-3.9-5-7.9C1 14 5 11 11 10c6-1 10-3.5 13.4-9 1.8 4 3.2 9 3.9 13.5" stroke="#57965c" stroke-width="2.1"/><path d="M5 24.6c3-1.5 6-2.5 9.2-3.4" stroke="#57965c" stroke-width="2.1"/><circle cx="23.4" cy="23" r="8.4" fill="#2b2d30"/><circle cx="23.4" cy="23" r="6" fill="#404245"/><path d="M19.6 18.6a6.1 6.1 0 1 0 7.6 0M23.4 14.6v6.8" stroke="#ced0d6" stroke-width="2.1"/></g></svg><div style="position:absolute;left:338px;top:1335.5px;font-family:'Liberation Sans', sans-serif;font-size:25px;line-height:26px;color:#dfe1e5;font-weight:400;white-space:pre;">application.properties</div><svg style="position:absolute;left:186px;top:1380px;overflow:visible" width="32" height="32" viewBox="0 0 32 32" fill="none" stroke-linecap="round" stroke-linejoin="round"><circle cx="17.5" cy="16.2" r="12" fill="#2f2158"/><path d="M10 24.8a7.5 5 0 0 0 15 0z" fill="#45388a" transform="translate(0 -5)"/><rect x="5" y="12.4" width="25" height="1.6" fill="#2c2b3e"/><rect x="5" y="15.4" width="25" height="1.6" fill="#2c2b3e"/><rect x="5" y="18.4" width="25" height="1.4" fill="#2c2b3e"/><path d="M15 2.8A13.4 13.4 0 0 0 15.5 29.6" stroke="#f7941e" stroke-width="2.2"/></svg><div style="position:absolute;left:224px;top:1383.5px;font-family:'Liberation Sans', sans-serif;font-size:25px;line-height:26px;color:#e0a572;font-weight:400;white-space:pre;">.classpath</div><svg style="position:absolute;left:186px;top:1428px;overflow:visible" width="32" height="32" viewBox="0 0 32 32" fill="none" stroke-linecap="round" stroke-linejoin="round"><path d="M4 6h22M4 12h17M4 18h22M4 24h17" stroke="#ced0d6" stroke-width="2"/></svg><div style="position:absolute;left:224px;top:1431.5px;font-family:'Liberation Sans', sans-serif;font-size:25px;line-height:26px;color:#e0a572;font-weight:400;white-space:pre;">.factorypath</div><svg style="position:absolute;left:186px;top:1476px;overflow:visible" width="32" height="32" viewBox="0 0 32 32" fill="none" stroke-linecap="round" stroke-linejoin="round"><path d="M4 6h22M4 12h17M4 18h22M4 24h17" stroke="#ced0d6" stroke-width="2"/></svg><div style="position:absolute;left:224px;top:1479.5px;font-family:'Liberation Sans', sans-serif;font-size:25px;line-height:26px;color:#dfe1e5;font-weight:400;white-space:pre;letter-spacing:0.35px;">.gitattributes</div><svg style="position:absolute;left:186px;top:1524px;overflow:visible" width="32" height="32" viewBox="0 0 32 32" fill="none" stroke-linecap="round" stroke-linejoin="round"><circle cx="16" cy="16" r="12" stroke="#ced0d6" stroke-width="2"/><path d="M8 24L24 8" stroke="#ced0d6" stroke-width="2"/></svg><div style="position:absolute;left:224px;top:1527.5px;font-family:'Liberation Sans', sans-serif;font-size:25px;line-height:26px;color:#dfe1e5;font-weight:400;white-space:pre;">.gitignore</div><svg style="position:absolute;left:186px;top:1572px;overflow:visible" width="32" height="32" viewBox="0 0 32 32" fill="none" stroke-linecap="round" stroke-linejoin="round"><circle cx="17.5" cy="16.2" r="12" fill="#2f2158"/><path d="M10 24.8a7.5 5 0 0 0 15 0z" fill="#45388a" transform="translate(0 -5)"/><rect x="5" y="12.4" width="25" height="1.6" fill="#2c2b3e"/><rect x="5" y="15.4" width="25" height="1.6" fill="#2c2b3e"/><rect x="5" y="18.4" width="25" height="1.4" fill="#2c2b3e"/><path d="M15 2.8A13.4 13.4 0 0 0 15.5 29.6" stroke="#f7941e" stroke-width="2.2"/></svg><div style="position:absolute;left:224px;top:1575.5px;font-family:'Liberation Sans', sans-serif;font-size:25px;line-height:26px;color:#e0a572;font-weight:400;white-space:pre;">.project</div><svg style="position:absolute;left:186px;top:1620px;overflow:visible" width="32" height="32" viewBox="0 0 32 32" fill="none" stroke-linecap="round" stroke-linejoin="round"><g stroke="#ced0d6" stroke-width="2" fill="none" stroke-linecap="round" stroke-linejoin="round"><path d="M1.8 25.6C1.6 19.5 3.8 15 7 12.6"/><path d="M6.8 12C7.4 9.2 11 7.7 15 7.7c5 0 8 2.8 11.4 3.8 2.6.6 4.2-1.4 4.2-3.6 0-2.4-2-3.6-4-3.6-1.4 0-2.6.7-3.2 1.6"/><path d="M29.8 11.6c-1.2 3.6-3.6 6-5.2 7.4-1.6 1.5-2.4 3.6-2.4 6.8"/><path d="M22.2 25.8H20c-.9-2.2-2-3.2-3.4-3.2s-2.6 1-3.6 3.4H10c-.9-2.3-1.8-3.3-3-3.3s-2.2 1-3.1 3.1H1.8"/><path d="M6.8 11.8c.6 2.4 1.6 5.8 3.6 5.8 2 0 3.6-2 5-3"/></g><circle cx="19.8" cy="14.6" r="1.3" fill="#ced0d6"/></svg><div style="position:absolute;left:224px;top:1623.5px;font-family:'Liberation Sans', sans-serif;font-size:25px;line-height:26px;color:#dfe1e5;font-weight:400;white-space:pre;">build.gradle</div><svg style="position:absolute;left:186px;top:1668px;overflow:visible" width="32" height="32" viewBox="0 0 32 32" fill="none" stroke-linecap="round" stroke-linejoin="round"><text x="0" y="24" font-family="Liberation Sans" font-weight="700" font-size="22" fill="#548af7">M</text><path d="M24.5 8v15M19.5 18l5 5 5-5" stroke="#548af7" stroke-width="2.4"/></svg><div style="position:absolute;left:224px;top:1671.5px;font-family:'Liberation Sans', sans-serif;font-size:25px;line-height:26px;color:#dfe1e5;font-weight:400;white-space:pre;letter-spacing:-1.1px;">CHANGELOG.md</div><svg style="position:absolute;left:186px;top:1716px;overflow:visible" width="32" height="32" viewBox="0 0 32 32" fill="none" stroke-linecap="round" stroke-linejoin="round"><rect x="3" y="5" width="26" height="22" rx="3" stroke="#ced0d6" stroke-width="2"/><path d="M9 11l4 4-4 4M15 21h7" stroke="#ced0d6" stroke-width="2"/></svg><div style="position:absolute;left:224px;top:1719.5px;font-family:'Liberation Sans', sans-serif;font-size:25px;line-height:26px;color:#dfe1e5;font-weight:400;white-space:pre;">gradlew</div><svg style="position:absolute;left:186px;top:1764px;overflow:visible" width="32" height="32" viewBox="0 0 32 32" fill="none" stroke-linecap="round" stroke-linejoin="round"><path d="M4 6h22M4 12h17M4 18h22M4 24h17" stroke="#ced0d6" stroke-width="2"/></svg><div style="position:absolute;left:224px;top:1767.5px;font-family:'Liberation Sans', sans-serif;font-size:25px;line-height:26px;color:#dfe1e5;font-weight:400;white-space:pre;">gradlew.bat</div></div></div></div><div style="position:absolute;left:730px;top:170px;width:16px;height:1414px;background:#48494c;border-radius:8px"></div><div style="position:absolute;left:752px;top:82px;width:2px;height:1704px;background:#1e1f22;"></div><div style="position:absolute;left:754px;top:82px;width:1808px;height:1704px;background:#1e1f22;"></div><svg style="position:absolute;left:776px;top:104px;overflow:visible" width="36" height="36" viewBox="0 0 32 32" fill="none" stroke-linecap="round" stroke-linejoin="round"><circle cx="16" cy="16" r="12.4" stroke="#548af7" stroke-width="2.4" fill="#25324d"/><path d="M19.2 12.2a5.6 5.6 0 1 0 0 7.6" stroke="#548af7" stroke-width="2.2"/><path d="M19.5 1.8l10.4 6.4a1 1 0 0 1 0 1.6l-10.4 6.4a1 1 0 0 1-1.4-.8V2.6a1 1 0 0 1 1.4-.8z" stroke="#57965c" stroke-width="2" fill="#253627"/><circle cx="25" cy="25" r="8.6" fill="#1e1f22"/><circle cx="25" cy="25" r="6.4" fill="#404245"/><path d="M21.4 20.6a6.2 6.2 0 1 0 7.2 0M25 16.6v6.6" stroke="#ced0d6" stroke-width="2.2"/></svg><div style="position:absolute;left:820px;top:110px;font-family:'Liberation Sans', sans-serif;font-size:25.4px;line-height:26px;color:#dfe1e5;font-weight:400;white-space:pre;">JavaBackendApplication.java</div><svg style="position:absolute;left:1236px;top:106px;overflow:visible" width="32" height="32" viewBox="0 0 32 32" fill="none" stroke-linecap="round" stroke-linejoin="round"><circle cx="16" cy="16" r="13" stroke="#548af7" stroke-width="2" fill="#25324d"/><path d="M20.5 12.2a6 6 0 1 0 0 7.6" stroke="#548af7" stroke-width="2"/></svg><div style="position:absolute;left:1279px;top:110px;font-family:'Liberation Sans', sans-serif;font-size:25.8px;line-height:26px;color:#70aeff;font-weight:400;white-space:pre;">ProductController.java</div><svg style="position:absolute;left:1550px;top:110px;overflow:visible" width="28" height="28" viewBox="0 0 28 28" fill="none" stroke-linecap="round" stroke-linejoin="round"><path d="M7 7l14 14M21 7L7 21" stroke="#9da0a8" stroke-width="1.9"/></svg><div style="position:absolute;left:1212px;top:156px;width:384px;height:7px;background:#3574f0;border-radius:4px"></div><div style="position:absolute;left:2520px;top:109.5px;width:5px;height:5px;border-radius:50%;background:#ced0d6"></div><div style="position:absolute;left:2520px;top:119.0px;width:5px;height:5px;border-radius:50%;background:#ced0d6"></div><div style="position:absolute;left:2520px;top:128.5px;width:5px;height:5px;border-radius:50%;background:#ced0d6"></div><div style="position:absolute;left:754px;top:162px;width:1808px;height:2px;background:#393b40;"></div><div style="position:absolute;left:754px;top:244px;width:1808px;height:2px;background:#393b40;"></div><svg style="position:absolute;left:2518px;top:176px;overflow:visible" width="36" height="28" viewBox="0 0 36 28" fill="none" stroke-linecap="round" stroke-linejoin="round"><path d="M7 15.5l6.5 6L28 7" stroke="#57965c" stroke-width="3.6"/></svg><div style="position:absolute;left:754px;top:346px;width:1808px;height:80px;background:#26282e;"></div><div style="position:absolute;left:892px;top:247px;width:2px;height:1539px;background:#2f3135;"></div><div class="code" style="left:770px;top:168.5px;font-size:30px;transform:scaleX(0.778);color:#4b5059">14</div><div class="code" style="left:770px;top:270px;font-size:30px;transform:scaleX(0.778);color:#4b5059">21</div><div class="code" style="left:770px;top:350px;font-size:30px;transform:scaleX(0.778);color:#a1a3ab">22</div><div class="code" style="left:770px;top:430px;font-size:30px;transform:scaleX(0.778);color:#4b5059">23</div><div class="code" style="left:770px;top:510px;font-size:30px;transform:scaleX(0.778);color:#4b5059">24</div><div class="code" style="left:770px;top:590px;font-size:30px;transform:scaleX(0.778);color:#4b5059">25</div><div class="code" style="left:770px;top:670px;font-size:30px;transform:scaleX(0.778);color:#4b5059">26</div><div class="code" style="left:770px;top:750px;font-size:30px;transform:scaleX(0.778);color:#4b5059">27</div><div class="code" style="left:770px;top:830px;font-size:30px;transform:scaleX(0.778);color:#4b5059">28</div><div class="code" style="left:770px;top:910px;font-size:30px;transform:scaleX(0.778);color:#4b5059">29</div><div class="code" style="left:770px;top:990px;font-size:30px;transform:scaleX(0.778);color:#4b5059">30</div><div class="code" style="left:770px;top:1070px;font-size:30px;transform:scaleX(0.778);color:#4b5059">31</div><div class="code" style="left:770px;top:1150px;font-size:30px;transform:scaleX(0.778);color:#4b5059">32</div><div class="code" style="left:770px;top:1230px;font-size:30px;transform:scaleX(0.778);color:#4b5059">33</div><div class="code" style="left:770px;top:1310px;font-size:30px;transform:scaleX(0.778);color:#4b5059">34</div><div class="code" style="left:770px;top:1390px;font-size:30px;transform:scaleX(0.778);color:#4b5059">35</div><div class="code" style="left:770px;top:1470px;font-size:30px;transform:scaleX(0.778);color:#4b5059">36</div><div class="code" style="left:770px;top:1550px;font-size:30px;transform:scaleX(0.778);color:#4b5059">37</div><div class="code" style="left:770px;top:1630px;font-size:30px;transform:scaleX(0.778);color:#4b5059">38</div><div class="code" style="left:770px;top:1710px;font-size:30px;transform:scaleX(0.778);color:#4b5059">39</div><div style="position:absolute;left:884px;top:247px;width:10px;height:16px;background:#549159;border-radius:0 0 5px 5px"></div><div style="position:absolute;left:884px;top:428px;width:10px;height:76px;background:#375fad;border-radius:5px"></div><div style="position:absolute;left:884px;top:1468px;width:10px;height:76px;background:#5c4d45;border-radius:5px"></div><svg style="position:absolute;left:810px;top:448px;overflow:visible" width="36" height="36" viewBox="0 0 36 36" fill="none" stroke-linecap="round" stroke-linejoin="round"><path d="M26 6A15 15 0 1 0 14 31" stroke="#57965c" stroke-width="2" fill="#233126"/><path d="M5 5l11 10" stroke="#57965c" stroke-width="2"/><circle cx="25" cy="25" r="10" fill="#1e1f22"/><circle cx="25" cy="25" r="8" stroke="#ced0d6" stroke-width="2.4" fill="#4b4d52"/><path d="M17 25h16M25 17c-3 3-3 13 0 16M25 17c3 3 3 13 0 16" stroke="#ced0d6" stroke-width="1.8"/></svg><div style="position:absolute;left:925px;top:505px;width:2px;height:1200px;background:#2f3135;"></div><div style="position:absolute;left:956px;top:746px;width:2px;height:639px;background:#2f3135;"></div><div style="position:absolute;left:986px;top:907px;width:2px;height:238px;background:#2f3135;"></div><div style="position:absolute;left:1017px;top:987px;width:2px;height:79px;background:#2f3135;"></div><div class="code" style="left:898px;top:168.5px"><span class="k">public</span> <span class="k">class</span> ProductController {</div><div class="code" style="left:898px;top:269.5px">  <span class="an">@GetMapping</span></div><div class="code" style="left:898px;top:349.5px">  <span class="k">public</span> Map&lt;String, List&lt;Product&gt;&gt;</div><div class="code" style="left:898px;top:429.5px">  <span class="fn">getAll</span>(<span class="an">@RequestParam</span>(required = <span class="k">false</span>) String category) {</div><div class="code" style="left:898px;top:589.5px">    Map&lt;String, List&lt;Product&gt;&gt; results = <span class="k">new</span> HashMap  ();</div><div class="code" style="left:898px;top:669.5px">    <span class="k">if</span> (category    <span class="k">null</span>) {</div><div class="code" style="left:898px;top:749.5px">      List&lt;Product&gt; filteredProducts = <span class="k">new</span> ArrayList  ();</div><div class="code" style="left:898px;top:829.5px">      <span class="k">for</span> (Product product : <span class="fd">productService</span>.<span class="fd">productStore</span>) {</div><div class="code" style="left:898px;top:909.5px">        <span class="k">if</span> (product.getCategory().equalsIgnoreCase(category)) {</div><div class="code" style="left:898px;top:989.5px">          filteredProducts.add(product);</div><div class="code" style="left:898px;top:1069.5px">        }</div><div class="code" style="left:898px;top:1149.5px">      }</div><div class="code" style="left:898px;top:1229.5px">      results.put(<span class="st">&quot;products&quot;</span>, filteredProducts);</div><div class="code" style="left:898px;top:1309.5px">      <span class="k">return</span> results;</div><div class="code" style="left:898px;top:1389.5px">    }</div><div class="code" style="left:898px;top:1549.5px">    results.put(<span class="st">&quot;products&quot;</span>, <span class="fd">productService</span>.<span class="fd">productStore</span>);</div><div class="code" style="left:898px;top:1629.5px">    <span class="k">return</span> results;</div><div class="code" style="left:898px;top:1709.5px">  }</div><svg style="position:absolute;left:0;top:0" width="2644" height="1844"><g stroke="#bcbec4" stroke-width="2.3" fill="none" stroke-linejoin="round" stroke-linecap="butt"><path d="M1694.6 627.5L1707.6 618.8L1720.6 627.5L1707.6 636.2Z"/><path d="M1694.6 787.5L1707.6 778.8L1720.6 787.5L1707.6 796.2Z"/><path d="M1158.6 704.7H1187.6M1158.6 710.7H1187.6M1177.1 699.5L1169.4 715.9"/></g></svg><div style="position:absolute;left:2526px;top:270px;width:4px;height:28px;background:#3d6aa8;"></div><div style="position:absolute;left:2526px;top:407px;width:4px;height:10px;background:#3d6aa8;"></div><div style="position:absolute;left:2526px;top:462px;width:4px;height:10px;background:#3d6aa8;"></div><div style="position:absolute;left:2526px;top:625px;width:4px;height:10px;background:#3d6aa8;"></div><div style="position:absolute;left:2526px;top:736px;width:4px;height:10px;background:#4f8a55;"></div><div style="position:absolute;left:2526px;top:818px;width:4px;height:10px;background:#3d6aa8;"></div><div style="position:absolute;left:2526px;top:1178px;width:4px;height:10px;background:#3d6aa8;"></div><div style="position:absolute;left:2526px;top:1340px;width:4px;height:10px;background:#3d6aa8;"></div><div style="position:absolute;left:2526px;top:1590px;width:4px;height:10px;background:#6b6e75;"></div><div style="position:absolute;left:2540px;top:736px;width:16px;height:549px;background:#3e4044;border-radius:8px"></div><svg style="position:absolute;left:2120px;top:1344px;overflow:visible" width="32" height="44" viewBox="0 0 32 44" fill="none" stroke-linecap="round" stroke-linejoin="round"><path d="M5 5v28l7-6 5 11 5-2-5-11h9z" fill="#000" stroke="#fff" stroke-width="2.4"/></svg><div style="position:absolute;left:2562px;top:82px;width:2px;height:1704px;background:#1e1f22;"></div><svg style="position:absolute;left:0;top:0" width="2644" height="700" viewBox="0 0 2644 700"><g stroke="#ced0d6" stroke-width="2.6" fill="none" stroke-linecap="round" stroke-linejoin="round"><path d="M2589.2 132.2l4.6-9.2v-8a10.2 10.2 0 0 1 20.4 0v8l4.6 9.2z"/><path d="M2601 216.8c-7.5-1-12.4-5.4-12.4-12 0-9.5 8-16.6 15.8-16.6 7 0 12.6 3.8 14.6 10"/><path d="M2601 210c-4.6-.6-7.4-3-7.4-6.6 0-4.6 4.4-8 9.2-8 3.6 0 6.6 1.6 8 4"/><path d="M2602.6 200.8c-2 .4-3.2 2-3.2 3.6 0 1.4.8 2.4 2 3"/><path d="M2607 203.6h13.4a2.6 2.6 0 0 1 2.6 2.6v15.2l-4.6-3.6h-11.4a2.6 2.6 0 0 1-2.6-2.6v-9a2.6 2.6 0 0 1 2.6-2.6z"/><ellipse cx="2604.2" cy="270" rx="14.4" ry="5.2"/><path d="M2589.8 270v24.4c0 3 6.4 5.2 14.4 5.2s14.4-2.2 14.4-5.2v-24.4M2589.8 278.6c0 3 6.4 5.2 14.4 5.2s14.4-2.2 14.4-5.2M2589.8 286.6c0 3 6.4 5.2 14.4 5.2s14.4-2.2 14.4-5.2"/><path d="M2609.6 441v-9a3.5 3.5 0 0 0-3.5-3.5h-14a3.5 3.5 0 0 0-3.5 3.5v21a3.5 3.5 0 0 0 3.5 3.5h3.5M2596.6 433.2h4.6"/><path d="M2598.6 457.6a11.6 10.6 0 0 1 23 0z"/><path d="M2603.6 445.2l1.8 2.8M2616.4 445.2l-1.8 2.8"/><path d="M2609.6 542v-9.6a3.5 3.5 0 0 0-3.5-3.5h-14a3.5 3.5 0 0 0-3.5 3.5v21.8a3.5 3.5 0 0 0 3.5 3.5h3.5M2596.6 533.6h4.6"/><rect x="2599.6" y="545" width="19.4" height="9.6" rx="1.6"/><path d="M2599.6 560.2h19.6"/><path d="M2609.6 620v-7.6a3.5 3.5 0 0 0-3.5-3.5h-14a3.5 3.5 0 0 0-3.5 3.5v23a3.5 3.5 0 0 0 3.5 3.5h8M2596.6 614h4.6"/><circle cx="2612.4" cy="626.4" r="6.6"/><path d="M2617.2 631.4l4.8 5"/></g><path d="M2599.6 136.2h8.8a4.4 4.2 0 0 1-8.8 0z" fill="#ced0d6"/><g transform="translate(2583.8 346.8) scale(1.39) translate(-1.5 -4.3)"><g stroke="#ced0d6" stroke-width="1.9" fill="none" stroke-linecap="round" stroke-linejoin="round"><path d="M1.8 25.6C1.6 19.5 3.8 15 7 12.6"/><path d="M6.8 12C7.4 9.2 11 7.7 15 7.7c5 0 8 2.8 11.4 3.8 2.6.6 4.2-1.4 4.2-3.6 0-2.4-2-3.6-4-3.6-1.4 0-2.6.7-3.2 1.6"/><path d="M29.8 11.6c-1.2 3.6-3.6 6-5.2 7.4-1.6 1.5-2.4 3.6-2.4 6.8"/><path d="M22.2 25.8H20c-.9-2.2-2-3.2-3.4-3.2s-2.6 1-3.6 3.4H10c-.9-2.3-1.8-3.3-3-3.3s-2.2 1-3.1 3.1H1.8"/><path d="M6.8 11.8c.6 2.4 1.6 5.8 3.6 5.8 2 0 3.6-2 5-3"/></g><circle cx="19.8" cy="14.6" r="1.3" fill="#ced0d6"/></g></svg><div style="position:absolute;left:2580px;top:491.5px;width:48px;height:2px;background:#393b40;"></div><div style="position:absolute;left:0px;top:1786px;width:2644px;height:2px;background:#1e1f22;"></div><div style="position:absolute;left:2363px;top:1802px;font-family:'Liberation Sans', sans-serif;font-size:25px;line-height:26px;color:#a8abb0;font-weight:400;white-space:pre;">22:1</div><svg style="position:absolute;left:2442px;top:1802px;overflow:visible" width="30" height="28" viewBox="0 0 30 28" fill="none" stroke-linecap="round" stroke-linejoin="round"><defs><linearGradient id="vg" x1="0" y1="0" x2="0.6" y2="1"><stop offset="0" stop-color="#35dd55"/><stop offset="0.55" stop-color="#22b6a0"/><stop offset="1" stop-color="#1a7cf5"/></linearGradient></defs><path d="M0.7 0.9H11.5L12 16 17.5 0.9H26.9L11 27.2H0.7z" fill="url(#vg)"/></svg><div style="position:absolute;left:2488px;top:1788px;width:136px;height:56px;background:#8fa85a;"></div><div style="position:absolute;left:2507px;top:1806px;font-family:'Liberation Sans', sans-serif;font-size:23px;line-height:26px;color:#000;font-weight:400;white-space:pre;">NORMAL</div></div></body></html>
